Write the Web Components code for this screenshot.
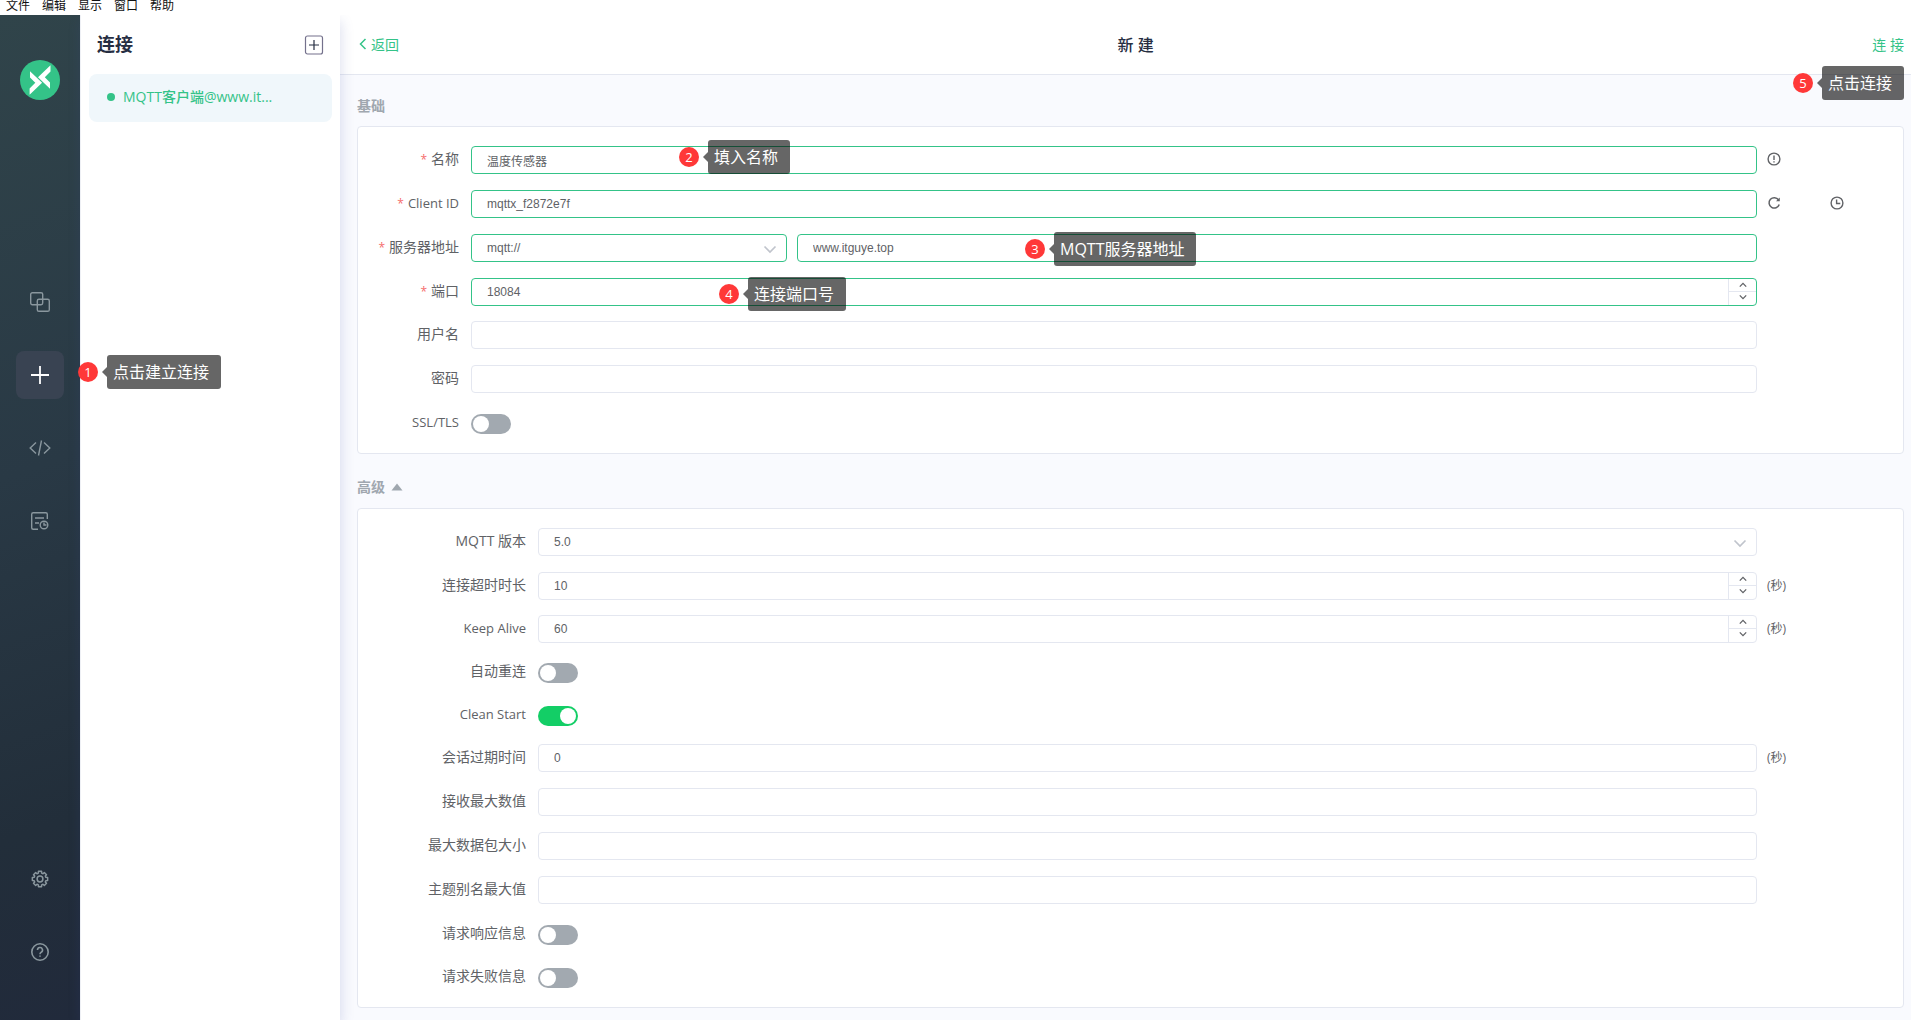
<!DOCTYPE html>
<html lang="zh-CN">
<head>
<meta charset="utf-8">
<title>MQTTX</title>
<style>
  html, body { height: 100%; margin: 0; }
  body {
    --green: #34c388;
    --line: #e4e7f0;
    --text: #606266;
    --muted: #a0a7af;
    --dark: #262e42;
    font-family: "Open Sans", "Noto Sans CJK SC", sans-serif;
    font-size: 14px;
    color: var(--text);
    overflow: hidden;
  }
</style>
</head>
<body>
<mx-app>
  <mx-menubar slot="menu"></mx-menubar>
  <mx-sidebar slot="side"></mx-sidebar>
  <mx-connections slot="list"></mx-connections>
  <mx-editor>
    <mx-section heading="基础">
      <mx-field label="名称" required value="温度传感器"><mx-icon slot="extra" name="info"></mx-icon></mx-field>
      <mx-field label="Client ID" required value="mqttx_f2872e7f"><mx-icon slot="extra" name="refresh"></mx-icon><mx-icon slot="extra" name="clock"></mx-icon></mx-field>
      <mx-field label="服务器地址" required type="address" value="www.itguye.top"></mx-field>
      <mx-field label="端口" required type="number" value="18084"></mx-field>
      <mx-field label="用户名"></mx-field>
      <mx-field label="密码" type="password"></mx-field>
      <mx-field label="SSL/TLS" type="switch"></mx-field>
    </mx-section>
    <mx-section heading="高级" collapsible style="--label: 180px">
      <mx-field label="MQTT 版本" type="select" value="5.0"></mx-field>
      <mx-field label="连接超时时长" type="number" value="10"><span slot="extra">(秒)</span></mx-field>
      <mx-field label="Keep Alive" type="number" value="60"><span slot="extra">(秒)</span></mx-field>
      <mx-field label="自动重连" type="switch"></mx-field>
      <mx-field label="Clean Start" type="switch" checked></mx-field>
      <mx-field label="会话过期时间" value="0"><span slot="extra">(秒)</span></mx-field>
      <mx-field label="接收最大数值"></mx-field>
      <mx-field label="最大数据包大小"></mx-field>
      <mx-field label="主题别名最大值"></mx-field>
      <mx-field label="请求响应信息" type="switch"></mx-field>
      <mx-field label="请求失败信息" type="switch"></mx-field>
    </mx-section>
  </mx-editor>
  <mx-tip slot="tips" step="1" style="left:78px;top:355px">点击建立连接</mx-tip>
  <mx-tip slot="tips" step="2" style="left:679px;top:140px">填入名称</mx-tip>
  <mx-tip slot="tips" step="3" style="left:1025px;top:232px">MQTT服务器地址</mx-tip>
  <mx-tip slot="tips" step="4" style="left:719px;top:277px">连接端口号</mx-tip>
  <mx-tip slot="tips" step="5" style="right:7px;top:66px">点击连接</mx-tip>
</mx-app>

<script>
const define = (name, render) => customElements.define(name, class extends HTMLElement {
  connectedCallback() {
    if (this.shadowRoot) return;
    this.attachShadow({ mode: 'open' }).innerHTML = '<style>*{box-sizing:border-box}button,input,select{font:inherit;color:inherit;margin:0}button{border:0;padding:0;background:none;cursor:pointer}a{text-decoration:none}</style>' + render(this);
  }
});

const gear = (() => {
  const pts = [];
  for (let i = 0; i < 8; i++) {
    const a = i * Math.PI / 4;
    [[-0.27, 6.1], [-0.2, 7.8], [0.2, 7.8], [0.27, 6.1]].forEach(([d, r]) =>
      pts.push((10 + r * Math.sin(a + d)).toFixed(2) + ' ' + (10 - r * Math.cos(a + d)).toFixed(2)));
  }
  return 'M' + pts.join('L') + 'Z';
})();

const icons = {
  copy: [20, '<rect x=".7" y=".7" width="12" height="12" rx="1.6"/><rect x="7.3" y="7.3" width="12" height="12" rx="1.6"/>', 1.4],
  plus: [20, '<path d="M10 1v18M1 10h18"/>', 1.8],
  code: [22, '<path d="M7 5.5 1.200 11 7 16.500M15 5.500 20.800 11 15 16.500M12.500 3.500 9.500 18.500"/>', 1.4],
  log: [20, '<path d="M8 18.300H3.200a1.500 1.500 0 0 1-1.500-1.500V3.200a1.500 1.500 0 0 1 1.500-1.500h12.600a1.500 1.500 0 0 1 1.500 1.500V8M5 7h9M5 12h4"/><circle cx="14" cy="14" r="3.800"/><path d="M14 11.500V14h2.500"/>', 1.4],
  gear: [20, `<path d="${gear}" stroke-linejoin="round"/><circle cx="10" cy="10" r="2.900"/>`, 1.5],
  help: [20, '<circle cx="10" cy="10" r="8.200"/><path d="M7.500 8a2.500 2.500 0 1 1 3.700 2.200c-.8.500-1.200.9-1.200 2M10 13.400v1.300"/>', 1.6],
  add: [20, '<rect x="1.500" y="1" width="17" height="18" rx="2" stroke="#74718c"/><path d="M10 5v10M5 10h10" stroke="#262e42"/>', 1.2],
  back: [12, '<path d="M8.500 1 3.500 6l5 5"/>', 1.5],
  info: [14, '<circle cx="7" cy="7" r="5.900"/><path d="M7 3.500v4.500M7 9.200v1.300"/>', 1.4],
  refresh: [14, '<path d="M11.500 3.800A5.200 5.200 0 1 0 12.200 8.500"/><path d="M9 5.200h3.800V1.500z" fill="currentColor" stroke="none"/>', 1.5],
  clock: [14, '<circle cx="7" cy="7" r="5.900"/><path d="M6.600 3.500v4h3.700"/>', 1.4],
  down: [14, '<path d="m1.500 4.500 5.500 5.500 5.500-5.500"/>', 1.7],
  up8: [8, '<path d="M.8 5.600 4 2.400l3.200 3.200"/>', 1.3],
  down8: [8, '<path d="M.8 2.400 4 5.600l3.200-3.200"/>', 1.3],
  caret: [12, '<path d="M6 2.500 11.500 9.500H.5z" fill="currentColor" stroke="none"/>', 0],
  logo: [40, '<circle cx="20" cy="20" r="20" fill="#34c388" stroke="none"/><path d="M50.500 25.300 38 37.300 50 48.700V42.500L44.800 37.300 50.500 31.500ZM29.600 54.700 42.100 42.700 30 31.300V37.500L35.300 42.700 29.600 48.500Z" transform="translate(-20 -20)" fill="#fff" stroke="none"/>', 0],
};
define('mx-icon', el => {
  const [s, body, w] = icons[el.getAttribute('name')];
  return `<style>:host{display:block;width:${s}px;height:${s}px}svg{display:block}</style>
  <svg width="${s}" height="${s}" viewBox="0 0 ${s} ${s}" fill="none" stroke="currentColor" stroke-width="${w}" aria-hidden="true">${body}</svg>`;
});

define('mx-app', () => `<style>
  :host{display:flex;flex-direction:column;height:100vh;position:relative;overflow:hidden;background:#fff}
  .body{flex:1;display:flex;min-height:0;overflow:hidden}
</style><slot name="menu"></slot><div class="body"><slot name="side"></slot><slot name="list"></slot><slot></slot></div><slot name="tips"></slot>`);

define('mx-menubar', () => `<style>
  :host{display:block;height:15px;background:#fff;color:#111;font-size:12px}
  nav{display:flex;gap:12px;padding-left:6px}
  button{display:block;height:12px;line-height:12px}
</style><nav>${['文件', '编辑', '显示', '窗口', '帮助'].map(t => `<button>${t}</button>`).join('')}</nav>`);

define('mx-sidebar', () => `<style>
  :host{flex:none;width:80px;display:flex;flex-direction:column;align-items:center;padding:45px 0 44px;box-sizing:border-box;background:linear-gradient(160deg,#30444a 0%,#293945 45%,#222e3a 80%,#212a3b 100%);color:#8a979e}
  nav{display:flex;flex-direction:column;gap:25px}
  .main{margin-top:178px;flex:1}
  button{width:48px;height:48px;border-radius:8px;display:flex;align-items:center;justify-content:center}
  .on{background:#394352;color:#fff}
</style><mx-icon name="logo"></mx-icon>
<nav class="main"><button aria-label="连接"><mx-icon name="copy"></mx-icon></button><button class="on" aria-label="新建"><mx-icon name="plus"></mx-icon></button><button aria-label="脚本"><mx-icon name="code"></mx-icon></button><button aria-label="日志"><mx-icon name="log"></mx-icon></button></nav>
<nav><button aria-label="设置"><mx-icon name="gear"></mx-icon></button><button aria-label="帮助"><mx-icon name="help"></mx-icon></button></nav>`);

define('mx-connections', () => `<style>
  :host{flex:none;width:260px;box-sizing:border-box;background:#fff;border-left:1px solid #eef0f5;padding:0 8px;position:relative;z-index:1;box-shadow:1px 6px 12px rgba(60,80,160,.18)}
  header{height:59px;display:flex;align-items:center;justify-content:space-between;padding:0 8px}
  h1{margin:0;font-size:18px;line-height:26px;padding-bottom:2px;font-weight:700;color:var(--dark)}
  .item{height:48px;border-radius:8px;background:#f0f7fb;color:var(--green);display:flex;align-items:center;gap:8px;padding:0 18px 2px;font-weight:500;white-space:nowrap}
  .item span{padding-bottom:2px}
  i{width:8px;height:8px;border-radius:50%;background:var(--green)}
</style><header><h1>连接</h1><button aria-label="新建连接"><mx-icon name="add"></mx-icon></button></header>
<a class="item" href="#"><i></i><span>MQTT客户端@www.it...</span></a>`);

define('mx-editor', () => `<style>
  :host{flex:1;min-width:0;background:#f9fafe;overflow:hidden}
  header{height:60px;background:#fff;border-bottom:1px solid var(--line);display:flex;align-items:center;justify-content:space-between;padding:0 7px 0 17px}
  a{color:var(--green);display:flex;align-items:center;gap:2px;padding-bottom:2px}
  h2{margin:0;font-size:16px;line-height:24px;font-weight:500;color:var(--dark)}
  main{padding:0 7px 0 17px}
</style><header><a href="#"><mx-icon name="back"></mx-icon>返回</a><h2>新 建</h2><a href="#">连 接</a></header><main><slot></slot></main>`);

define('mx-section', el => {
  const heading = el.getAttribute('heading');
  return `<style>
  :host{display:block}
  h3{margin:0;height:51px;padding-top:20px;font-size:14px;line-height:22px;font-weight:700;color:var(--muted)}
  :host([collapsible]) h3{height:54px;padding-top:22px}
  h3 button{display:flex;align-items:center;gap:6px;font-weight:700;line-height:22px}
  .card{background:#fff;border:1px solid var(--line);border-radius:4px;padding:19px 0 17px;display:flex;flex-direction:column;gap:16px}
</style><h3>${el.hasAttribute('collapsible') ? `<button>${heading}<mx-icon name="caret"></mx-icon></button>` : heading}</h3><div class="card"><slot></slot></div>`;
});

define('mx-field', el => {
  const type = el.getAttribute('type') || 'text', label = el.getAttribute('label'), v = el.getAttribute('value') || '';
  const controls = {
    text: `<input id="c" type="text" value="${v}">`,
    password: `<input id="c" type="password" value="${v}">`,
    number: `<div class="num"><input id="c" type="number" value="${v}"><div class="steps"><button aria-label="加"><mx-icon name="up8"></mx-icon></button><button aria-label="减"><mx-icon name="down8"></mx-icon></button></div></div>`,
    select: `<div class="sel"><select id="c"><option>${v}</option></select><mx-icon name="down"></mx-icon></div>`,
    address: `<div class="pair"><div class="sel"><select id="c"><option>mqtt://</option></select><mx-icon name="down"></mx-icon></div><input type="text" aria-label="主机" value="${v}"></div>`,
    switch: `<input id="c" type="checkbox" role="switch"${el.hasAttribute('checked') ? ' checked' : ''}>`,
  };
  return `<style>
  :host{display:grid;grid-template-columns:var(--label,113px) minmax(0,1fr) 146px;align-items:start;height:28px;--edge:var(--line)}
  :host([required]){--edge:var(--green)}
  :host([type=number]),:host([type=switch]){height:27px}
  label{text-align:right;padding-right:12px;line-height:26px;white-space:nowrap}
  label.latin{font-size:13px}
  b{color:#f56c6c;font-weight:400;margin-right:4px;font-size:12px}
  input:not([type=checkbox]),select{appearance:none;-moz-appearance:textfield;display:block;width:100%;height:28px;border:1px solid var(--edge);border-radius:4px;background:#fff;padding:0 15px;font:12px "Liberation Sans","Noto Sans CJK SC",sans-serif;color:var(--text);outline:none}
  input::-webkit-inner-spin-button{appearance:none;margin:0}
  .pair{display:grid;grid-template-columns:79fr 240fr;gap:10px}
  .sel,.num{position:relative}
  .sel mx-icon{position:absolute;right:10px;top:8px;color:#c0c4cc;pointer-events:none}
  .steps{position:absolute;right:1px;top:1px;bottom:1px;width:28px;border-left:1px solid var(--line);display:flex;flex-direction:column}
  .steps button{flex:1;display:flex;align-items:center;justify-content:center}
  .steps button+button{border-top:1px solid var(--line);padding-bottom:2px}
  input[type=checkbox]{appearance:none;display:block;width:40px;height:20px;border-radius:10px;background:#a2a9b0;margin-top:5px;padding:2px}
  input[type=checkbox]::before{content:"";display:block;width:16px;height:16px;border-radius:50%;background:#fff}
  input[type=checkbox]:checked{background:#13ce66;padding-left:22px}
  .extra{display:flex;align-items:center;gap:49px;height:26px;padding-left:10px;font-size:12px}
</style><label for="c"${/^[\x20-\x7e]+$/.test(label) ? ' class="latin"' : ''}>${el.hasAttribute('required') ? '<b>*</b>' : ''}${label}</label>${controls[type]}<div class="extra"><slot name="extra"></slot></div>`;
});

define('mx-tip', el => `<style>
  :host{position:absolute;z-index:5;display:flex;align-items:center;color:#fff;white-space:nowrap}
  .n{width:20px;height:20px;border-radius:50%;background:#ff3838;font-size:13px;line-height:20px;text-align:center;margin-right:4px}
  .arrow{border:5px solid transparent;border-left:0;border-right-color:rgba(0,0,0,.6)}
  .box{height:34px;line-height:34px;padding:0 12px 0 6px;border-radius:3px;background:rgba(0,0,0,.6);font-size:16px}
</style><span class="n">${el.getAttribute('step')}</span><span class="arrow"></span><span class="box"><slot></slot></span>`);
</script>
</body>
</html>
